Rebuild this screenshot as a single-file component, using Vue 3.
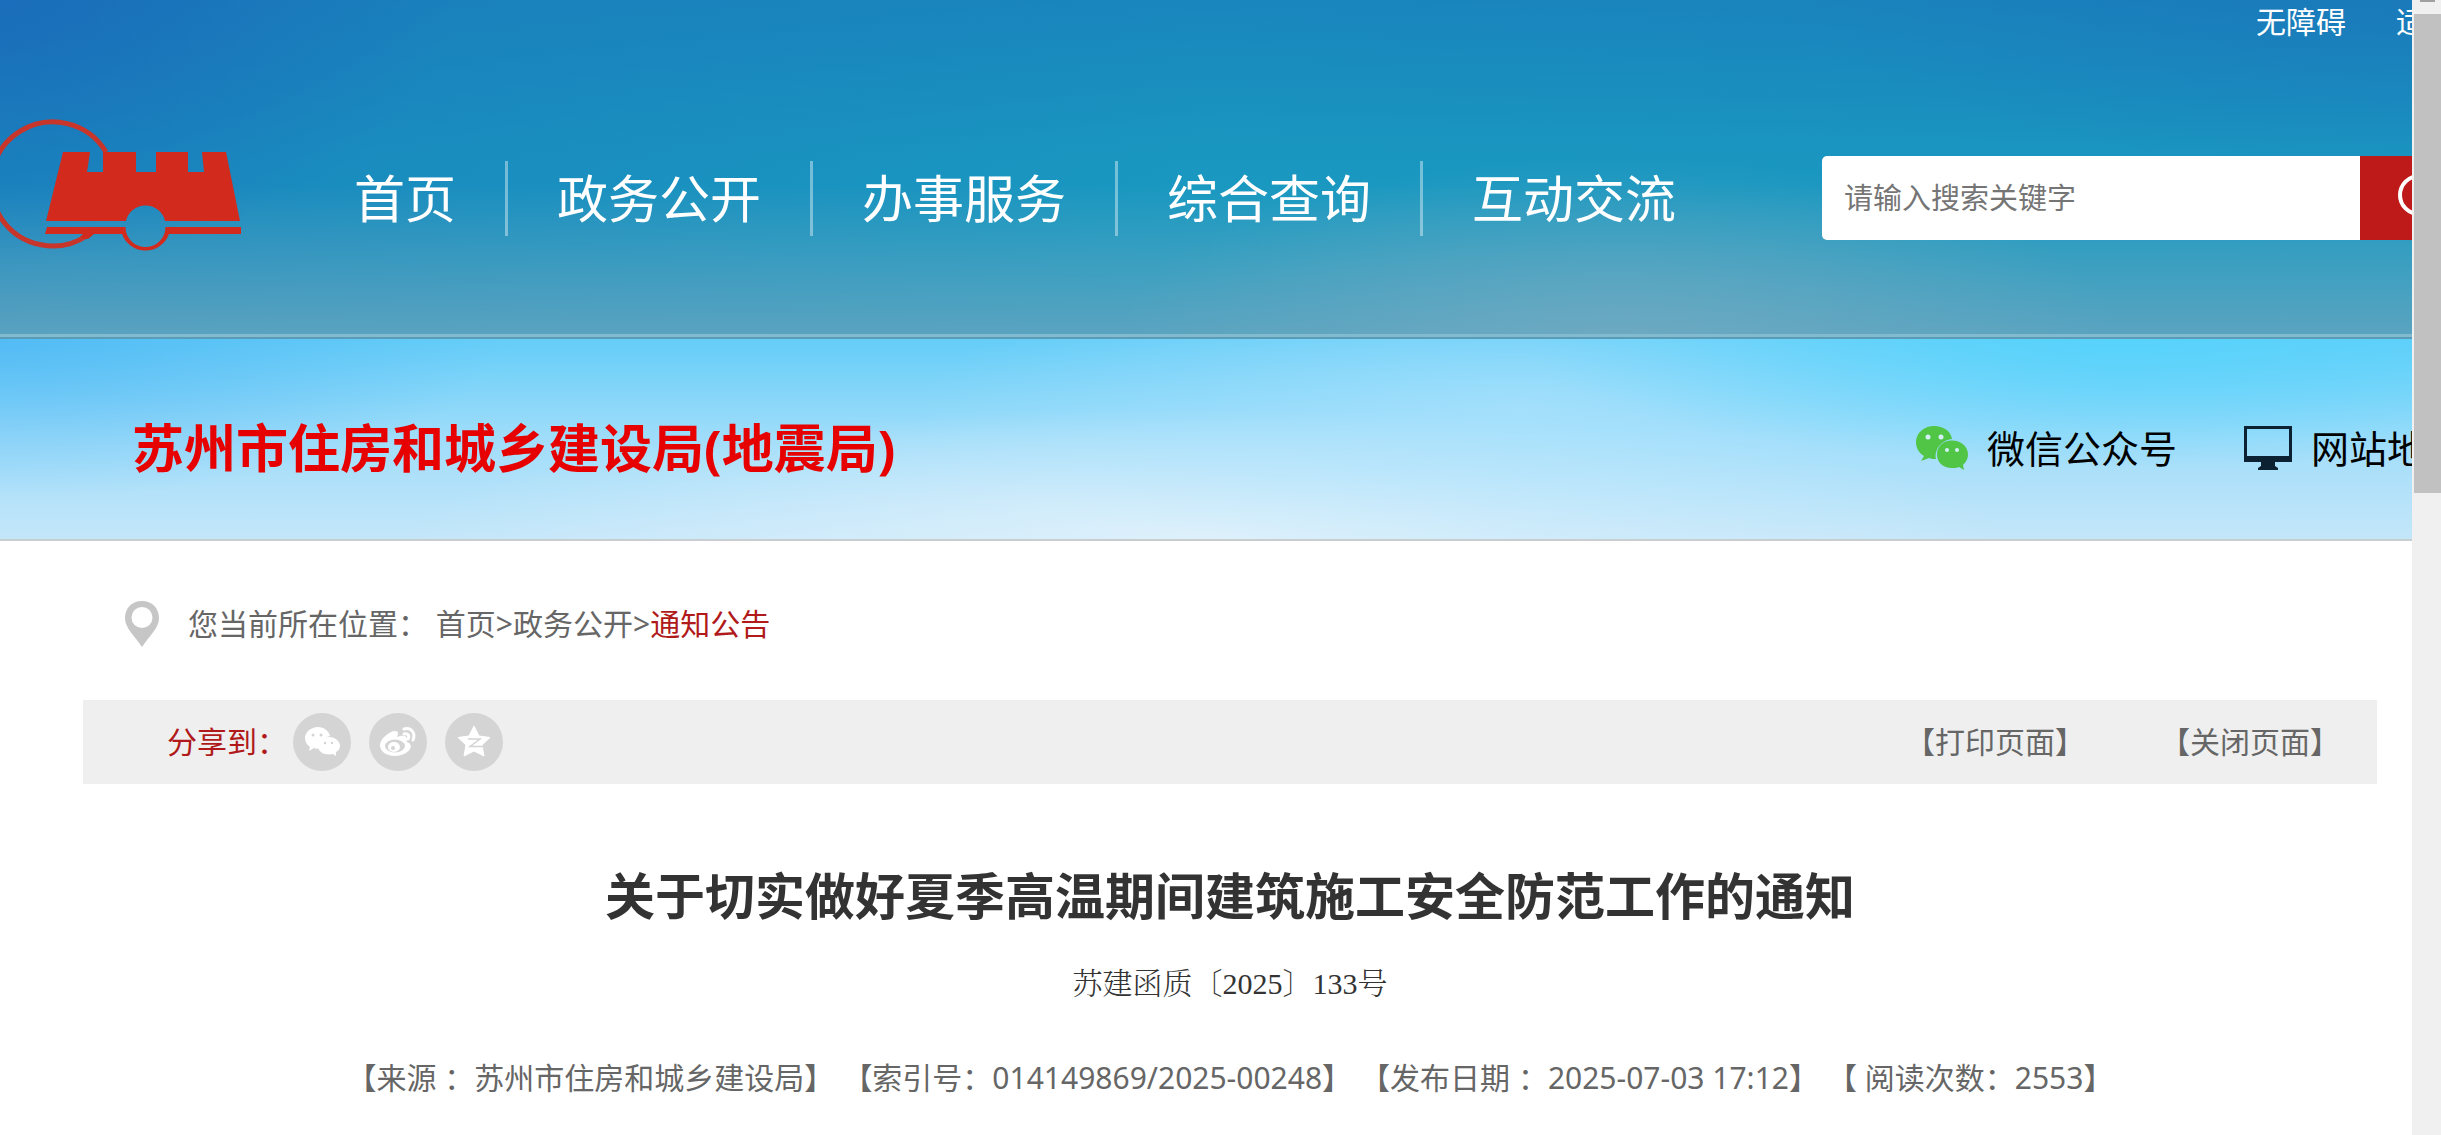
<template>
  <div class="page">
    <main class="view">
      <header class="header">
        <div class="header__top">
          <a v-for="item in topLinks" :key="item" href="#">{{ item }}</a>
        </div>
        <div class="header__main">
          <a class="logo" href="#" aria-label="首页">
            <svg class="logo__img" viewBox="0 0 241 134">
              <path d="M106 34A62 62 0 1 0 88 117" fill="none" stroke="#c8352b" stroke-width="5" />
              <path
                fill="#d22a1c"
                d="M63 34H90L87 54H103V34H136V54H156V34H188V54H204L202 34H226L240 103H165A20 20 0 0 0 126 103H46Z"
              />
              <path
                fill="#d22a1c"
                d="M47 109H125.500A20 20 0 0 0 165.500 109H241V116H169A25 25 0 0 1 122 116H94L88 121L80 119L83 116H45Z"
              />
            </svg>
          </a>
          <nav class="nav">
            <a v-for="item in menu" :key="item" class="nav__item" href="#">{{ item }}</a>
          </nav>
          <form class="search" @submit.prevent>
            <input
              v-model="keyword"
              class="search__input"
              type="text"
              aria-label="搜索"
              placeholder="请输入搜索关键字"
            />
            <button class="search__btn" type="submit" aria-label="提交搜索">
              <svg viewBox="0 0 50 50">
                <circle cx="22" cy="22" r="19" />
                <path d="M36 36L47 47" />
              </svg>
            </button>
          </form>
        </div>
      </header>

      <section class="banner">
        <h2 class="banner__title">苏州市住房和城乡建设局(地震局)</h2>
        <div class="banner__links">
          <a class="banner__link" href="#">
            <svg class="banner__icon" viewBox="0 0 52 44">
              <g fill="#51c545">
                <path d="M18 0C8 0 0 7 0 16C0 22 3 27 8 30L5 35L13 32C15 33 18 33 20 33C18 23 26 14 36 13C35 5 27 0 18 0Z" />
                <path d="M36 14.500C27 14.500 21 20.500 21 28.500S27 42 36 42C38 42 41 42 43 41L48 44L47 39C50 36 52 33 52 28.500C52 20.500 45 14.500 36 14.500Z" />
              </g>
              <g fill="#d3effb">
                <circle cx="12" cy="11" r="2.500" />
                <circle cx="25" cy="11" r="2.500" />
                <circle cx="31" cy="24" r="2" />
                <circle cx="41" cy="24" r="2" />
              </g>
            </svg>
            <span>微信公众号</span>
          </a>
          <a class="banner__link" href="#">
            <svg class="banner__icon banner__icon--pc" viewBox="0 0 48 44">
              <path
                fill="#0c2233"
                fill-rule="evenodd"
                d="M0 0H48V36H31V40L34 42V44H14V42L17 40V36H0ZM3 3V30H45V3Z"
              />
            </svg>
            <span>网站地图</span>
          </a>
        </div>
      </section>

      <div class="crumbs">
        <svg class="crumbs__pin" viewBox="0 0 34 46">
          <path
            fill="#c6c6c6"
            fill-rule="evenodd"
            d="M17 0C7 0 0 7 0 17C0 27 9 34 17 46C25 34 34 27 34 17C34 7 27 0 17 0ZM17 6A10.500 10.500 0 1 1 17 27A10.500 10.500 0 1 1 17 6Z"
          />
        </svg>
        <span>您当前所在位置：&nbsp;<a href="#">首页</a>&gt;<a href="#">政务公开</a>&gt;<a class="crumbs__current" href="#">通知公告</a></span>
      </div>

      <article class="article">
        <div class="share">
          <span class="share__label">分享到：</span>
          <button class="share__btn" type="button" aria-label="微信">
            <svg viewBox="0 0 58 58">
              <g fill="#fff">
                <path d="M25 14C18 14 12 19 12 25C12 29 14 32 17 34L16 38L21 35C23 36 25 36 27 35C27 29 32 24 37 23C36 18 31 14 25 14Z" />
                <path d="M36 24C30 24 25 28 25 33S30 41.500 36 41.500L40 41L43 43L43 39C45 38 47 36 47 33C47 28 42 24 36 24Z" />
              </g>
              <g fill="#d4d4d4">
                <circle cx="20" cy="22" r="1.500" />
                <circle cx="28" cy="22" r="1.500" />
                <circle cx="32" cy="30" r="1.200" />
                <circle cx="39" cy="30" r="1.200" />
              </g>
            </svg>
          </button>
          <button class="share__btn" type="button" aria-label="微博">
            <svg viewBox="0 0 58 58">
              <path
                fill="#fff"
                d="M11 32C11 26 21 17 27 18C30 19 29 22 28 24C33 22 38 22 38 26C38 28 37 29 38 29C41 30 43 33 41 36C39 40 32 43 26 43C18 43 11 39 11 32Z"
              />
              <ellipse cx="26" cy="33" rx="10" ry="6.500" fill="#d4d4d4" />
              <ellipse cx="25" cy="34" rx="6" ry="5" fill="#fff" />
              <circle cx="24" cy="35" r="2" fill="#d4d4d4" />
              <g fill="none" stroke="#fff" stroke-width="3" stroke-linecap="round">
                <path d="M35 16C42 14 47 20 44 27" />
                <path d="M35 21C39 20 41 23 39 26" />
              </g>
            </svg>
          </button>
          <button class="share__btn" type="button" aria-label="QQ空间">
            <svg viewBox="0 0 58 58">
              <path
                fill="#fff"
                stroke="#fff"
                stroke-width="1"
                stroke-linejoin="round"
                d="M29 13L34 23L45 24.500L37 32L39 43L29 38L19 43L21 32L13 24.500L24 23Z"
              />
              <path fill="none" stroke="#d4d4d4" stroke-width="1.500" d="M23 26H35L25 33.500H38" />
            </svg>
          </button>
          <div class="share__actions">
            <button type="button">【打印页面】</button>
            <button type="button">【关闭页面】</button>
          </div>
        </div>

        <h1 class="article__title">关于切实做好夏季高温期间建筑施工安全防范工作的通知</h1>
        <p class="article__number">苏建函质〔2025〕133号</p>
        <p class="article__meta">
          <span v-for="item in meta" :key="item">{{ item }}</span>
        </p>
      </article>
    </main>

    <div class="scrollbar" aria-hidden="true">
      <div class="scrollbar__arrow"></div>
      <div class="scrollbar__thumb"></div>
    </div>
  </div>
</template>

<script setup>
import { ref } from "vue";

const keyword = ref("");

const topLinks = ["无障碍", "适老化"];
const menu = ["首页", "政务公开", "办事服务", "综合查询", "互动交流"];
const meta = [
  "【来源 ：苏州市住房和城乡建设局】",
  "【索引号：014149869/2025-00248】",
  "【发布日期 ：2025-07-03 17:12】",
  "【 阅读次数：2553】",
];
</script>

<style>
body {
  overflow: hidden;
}
</style>

<style scoped>
.page {
  display: flex;
  height: 100vh;
  overflow: hidden;
  font-family: "Noto Sans", "Noto Sans CJK SC", sans-serif;
  font-size: 30px;
  line-height: 44px;
  color: #666;
  background: #fff;
}
.page a {
  color: inherit;
  text-decoration: none;
}
.page button {
  padding: 0;
  border: 0;
  font: inherit;
  color: inherit;
  background: none;
  cursor: pointer;
}
.page svg {
  display: block;
}
.view {
  flex: 1;
  min-width: 0;
  overflow: hidden;
}

.header {
  height: 337px;
  border-bottom: 2px solid #5a9bb6;
  box-shadow: inset 0 -3px #82bad0;
  overflow: hidden;
  color: #fff;
  white-space: nowrap;
  background:
    radial-gradient(ellipse 500px 180px at 67% 100%, rgba(122, 173, 194, 0.6), transparent),
    radial-gradient(ellipse 450px 260px at 0 0, rgba(26, 98, 184, 0.6), transparent),
    radial-gradient(ellipse 600px 170px at 100% 0, rgba(26, 112, 184, 0.4), transparent),
    linear-gradient(to bottom, transparent 55%, rgba(98, 164, 192, 0.9) 100%),
    linear-gradient(to right, rgba(26, 122, 188, 0.5), rgba(22, 160, 192, 0.2) 50%, transparent),
    linear-gradient(to bottom, #1a80bc, #1a94c0 45%, #1a9fc2);
}
.header__top {
  display: flex;
  justify-content: flex-end;
  gap: 50px;
  height: 44px;
  margin-right: -74px;
}
.header__main {
  display: flex;
  align-items: center;
  height: 308px;
}
.logo {
  flex: none;
  margin-top: -26px;
}
.logo__img {
  width: 241px;
  height: 134px;
}
.nav {
  display: flex;
  flex: none;
  margin: 0 auto 0 64px;
}
.nav__item {
  padding: 0 49px;
  font-size: 51px;
  line-height: 75px;
  border-right: 3px solid rgba(255, 255, 255, 0.4);
}
.nav__item:last-child {
  border-right: 0;
}
.search {
  display: flex;
  flex: none;
  width: 673px;
  height: 84px;
  margin-right: -83px;
}
.search__input {
  flex: 1;
  min-width: 0;
  padding: 0 22px;
  border: 0;
  border-radius: 5px 0 0 5px;
  outline: 0;
  font: inherit;
  font-size: 29px;
  color: #333;
  background: #fff;
}
.search__input::placeholder {
  color: #757575;
  opacity: 1;
}
.search__btn {
  display: flex;
  align-items: center;
  width: 135px;
}
.page .search__btn {
  padding-left: 37px;
  background: #bf1a1a;
}
.search__btn svg {
  width: 50px;
  height: 50px;
  fill: none;
  stroke: #fff;
  stroke-width: 4;
}

.banner {
  display: flex;
  align-items: center;
  justify-content: space-between;
  height: 182px;
  padding: 18px 0 0 132px;
  border-bottom: 2px solid #c8cdd0;
  overflow: hidden;
  white-space: nowrap;
  background:
    radial-gradient(ellipse 600px 130px at 88% 0, rgba(84, 212, 252, 0.8), transparent),
    radial-gradient(ellipse 500px 160px at 0 0, rgba(70, 176, 242, 0.6), transparent),
    radial-gradient(ellipse 600px 150px at 63% 35%, rgba(176, 228, 253, 0.6), transparent),
    radial-gradient(ellipse 800px 130px at 50% 100%, rgba(228, 243, 252, 0.8), transparent),
    linear-gradient(to bottom, #64cdf8, #a0ddfa 50%, #c4e6f9);
}
.banner__title {
  margin: 0;
  font-size: 52px;
  line-height: 76px;
  font-weight: 700;
  color: #e60000;
}
.banner__links {
  display: flex;
  gap: 67px;
  margin-right: -51px;
  font-size: 38px;
  line-height: 56px;
  color: #000;
}
.banner__link {
  display: flex;
  align-items: center;
  gap: 19px;
}
.banner__icon {
  width: 52px;
  height: 44px;
}
.banner__icon--pc {
  width: 48px;
}

.crumbs {
  display: flex;
  align-items: center;
  gap: 29px;
  padding: 60px 0 53px 125px;
}
.crumbs__pin {
  width: 34px;
  height: 46px;
}
.page .crumbs__current {
  color: #b01a1a;
}

.article {
  margin: 0 35px 0 83px;
  text-align: center;
}
.share {
  display: flex;
  align-items: center;
  gap: 18px;
  height: 84px;
  padding: 0 37px 0 84px;
  background: #efefef;
}
.share__label {
  margin-right: -12px;
  color: #b01a1a;
}
.share__btn svg {
  width: 58px;
  height: 58px;
  border-radius: 50%;
  background: #d4d4d4;
}
.share__actions {
  display: flex;
  gap: 75px;
  margin-left: auto;
}
.article__title {
  margin: 74px 0 0;
  font-size: 50px;
  line-height: 76px;
  color: #333;
}
.article__number {
  margin: 28px 0 0;
  font-family: "Liberation Serif", "Noto Serif CJK SC", "Noto Sans CJK SC", serif;
  font-weight: 300;
  color: #333;
}
.article__meta {
  display: flex;
  justify-content: center;
  gap: 8px;
  margin: 50px 0 0;
  white-space: nowrap;
}

.scrollbar {
  flex: none;
  width: 27px;
  padding-left: 2px;
  background: #f0f0f0;
}
.scrollbar__arrow {
  width: 15px;
  height: 2px;
  margin: 0 auto 12px;
  background: #a0a0a0;
}
.scrollbar__thumb {
  height: 479px;
  background: #c1c1c1;
}
</style>
